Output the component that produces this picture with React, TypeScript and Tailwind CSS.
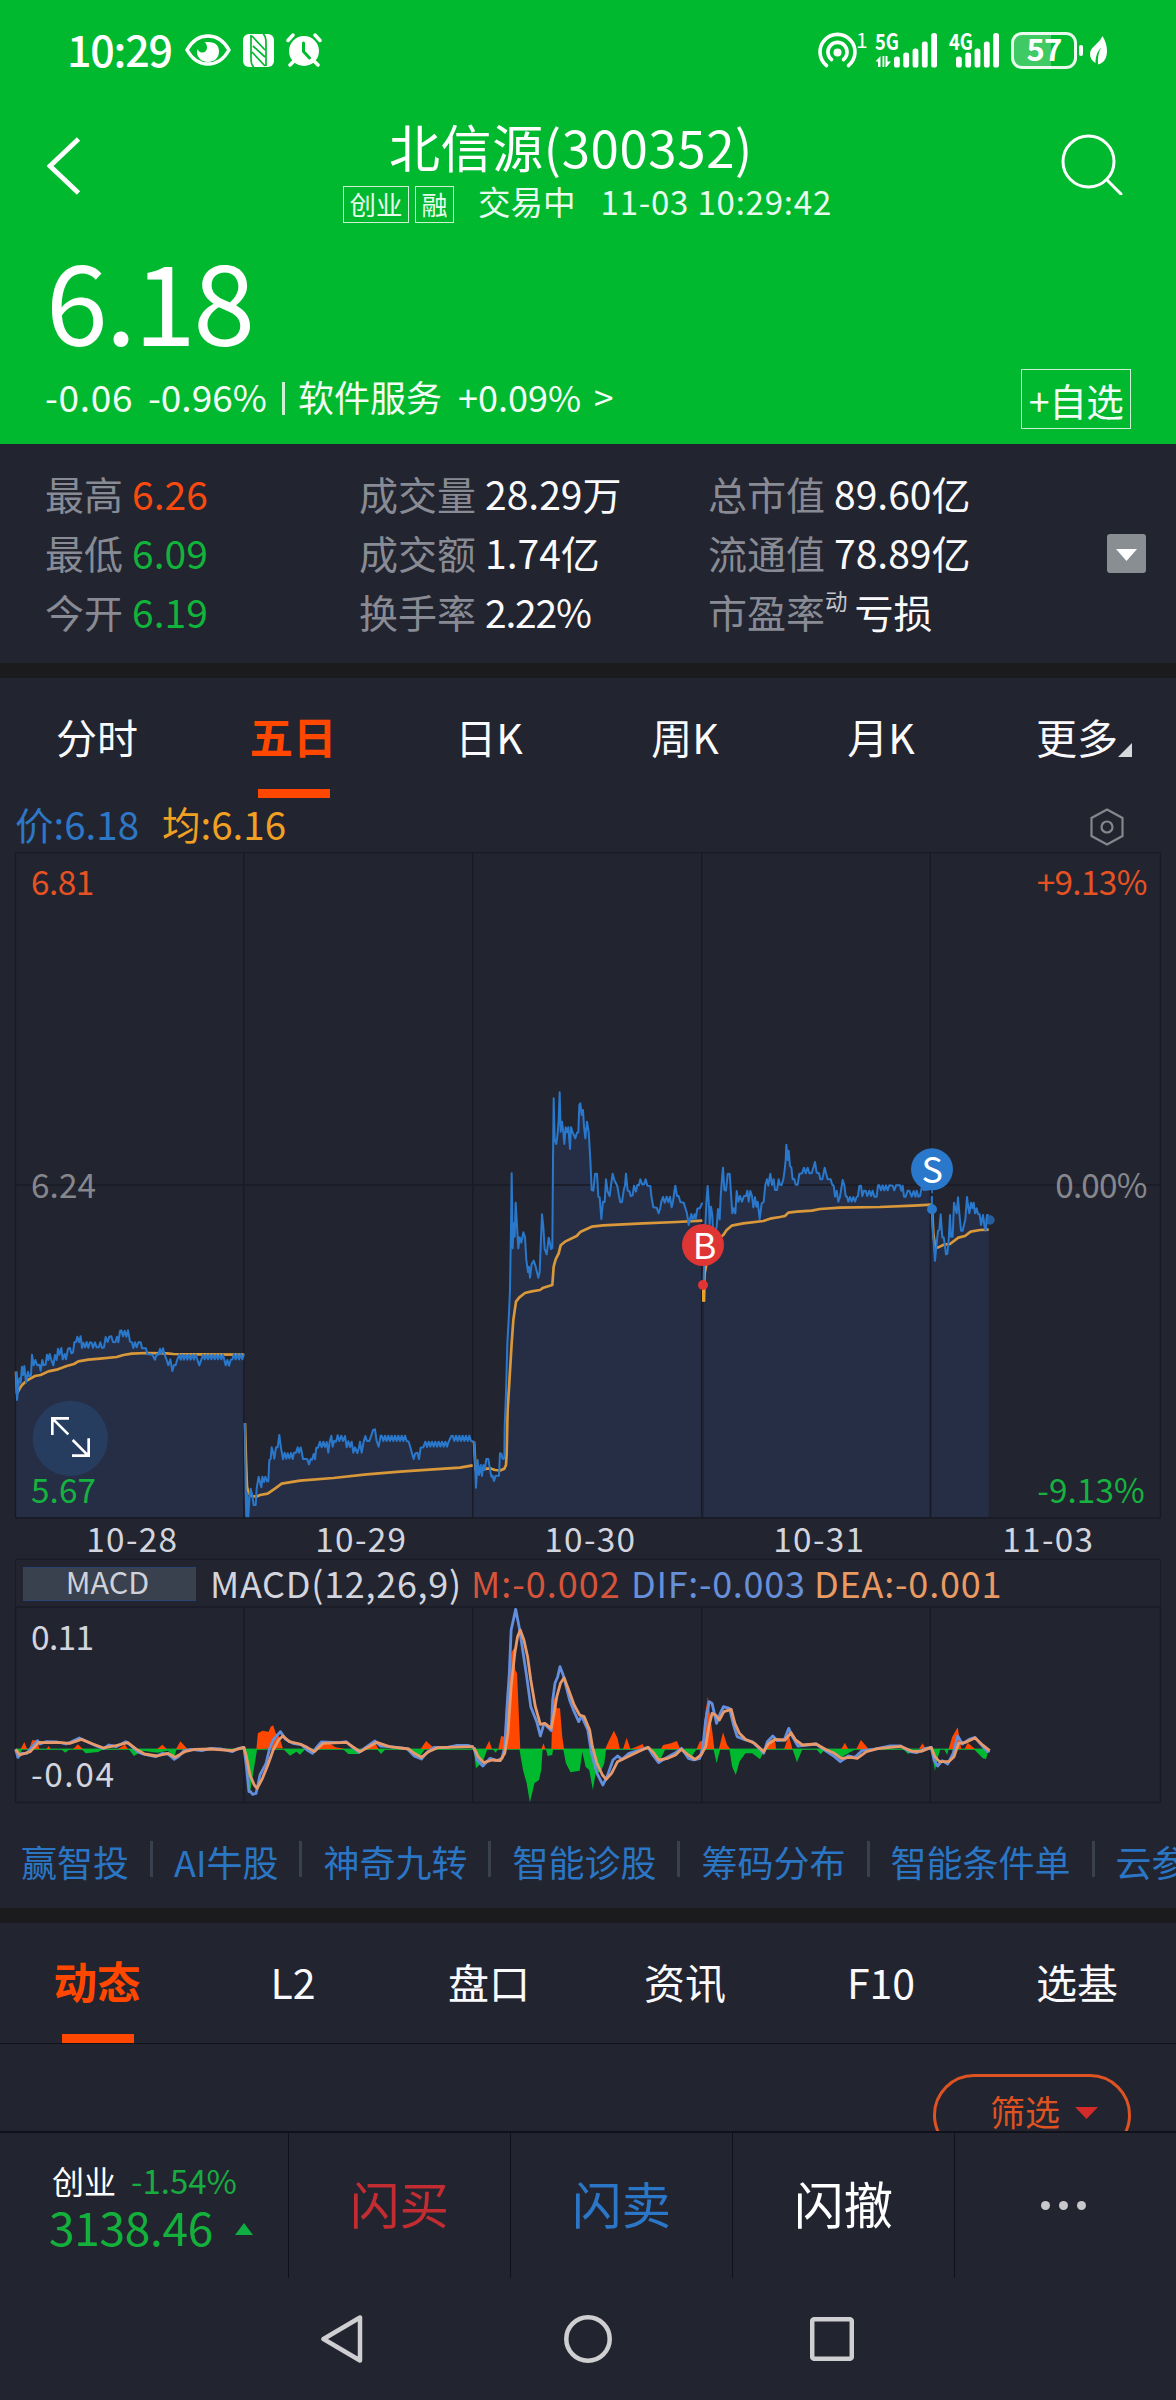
import React, { useState } from 'react';

type Point = [number, number];

// Parses "x,y x,y" and expands "~x0,x1,a,b" into a tight zigzag between two price levels
const parse = (src: string): Point[] => {
  const points: Point[] = [];
  src.trim().split(/\s+/).forEach((token) => {
    if (token[0] === '~') {
      const [x0, x1, a, b] = token.slice(1).split(',').map(Number);
      let up = true;
      for (let x = x0; x <= x1; x += 5) {
        points.push([x, up ? a : b]);
        up = !up;
      }
      return;
    }
    const [x, y] = token.split(',').map(Number);
    points.push([x, y]);
  });
  return points;
};

const toLine = (points: Point[]) => 'M' + points.map((p) => p.join(' ')).join('L');

interface Session {
  dx: number;
  dy: number;
  price: string;
  avg: string;
}

// Plot units are a third of a pixel, dx / dy is the origin of each session
const sessions: Session[] = [
  {
    dx: 0,
    dy: 1224,
    price:
      '48,335 51,420 58,355 62,368 66,320 70,345 73,318 78,368 84,335 88,350 93,345 96,284 101,316 106,300 112,316 118,314 122,332 127,300 131,316 137,314 141,284 145,300 149,282 154,300 160,316 165,285 170,300 174,266 178,284 184,264 188,298 194,282 198,298 204,266 210,264 214,280 219,278 223,247 228,246 232,230 237,247 242,229 246,264 250,248 255,262 260,246 265,263 270,247 275,248 279,263 285,247 290,262 296,262 301,247 306,264 312,262 317,231 323,246 328,230 334,229 339,246 346,247 351,230 355,247 360,213 364,211 369,229 374,212 379,230 384,211 390,245 396,247 400,264 405,247 410,262 415,247 422,247 426,265 438,265 442,282 457,284 465,299 470,283 475,284 480,266 484,282 489,265 494,284 500,300 505,316 511,298 517,333 522,315 527,316 532,298 538,283 ~542,592,299,284 598,316 604,299 ~609,672,284,298 677,316 682,300 687,317 692,300 ~697,733,298,282',
    avg: '48,335 51,400 58,387 66,375 80,362 92,355 105,348 122,345 145,334 170,329 200,318 222,312 235,304 265,299 300,296 350,291 370,285 395,281 440,279 500,280 520,282 600,283 732,284',
  },
  {
    dx: 0,
    dy: 1224,
    price:
      '735,490 737,700 739,769 742,700 745,769 748,720 752,686 757,705 761,735 767,735 770,685 773,667 776,650 780,667 784,682 787,650 792,666 796,650 801,664 805,664 808,600 812,597 815,562 820,580 823,596 828,562 833,562 838,525 843,565 846,580 849,598 854,578 859,596 863,580 868,595 873,579 878,597 882,578 888,578 893,562 897,578 902,562 906,580 909,597 918,597 922,598 927,613 932,597 936,600 941,582 945,598 949,563 954,563 960,545 965,562 970,545 975,561 980,546 985,578 989,545 994,527 998,560 1002,543 1008,545 1013,526 1018,543 1024,527 1029,543 1035,528 1040,562 1045,544 1050,561 1055,545 1060,578 1065,562 1072,579 1077,562 1080,545 1085,578 1091,545 1096,528 1101,543 1108,543 1114,526 1119,510 1125,508 1130,543 1136,560 1142,527 ~1145,1222,527,543 1226,545 1231,562 1236,580 1241,597 1246,580 1252,578 1257,597 1262,563 1270,562 1276,545 1281,561 ~1286,1350,545,560 1354,528 ~1358,1415,527,543 1422,545',
    avg: '735,490 738,600 741,680 746,700 756,708 770,710 780,705 803,701 830,682 845,671 900,662 1000,654 1100,643 1200,635 1300,628 1380,623 1418,616',
  },
  {
    dx: 1380,
    dy: 624,
    price:
      '42,1145 45,1200 48,1283 53,1200 57,1245 62,1215 66,1248 70,1215 74,1230 79,1197 85,1197 90,1228 94,1250 98,1247 102,1263 107,1247 117,1247 120,1180 124,1181 128,1197 133,1195 134,1100 138,1000 142,850 147,760 150,690 153,500 155,340 158,565 161,490 164,530 167,428 170,480 175,565 179,532 184,548 190,517 195,532 199,600 204,636 207,620 210,653 215,612 221,602 227,620 231,637 235,653 239,636 242,560 246,463 250,500 254,567 260,583 266,533 270,550 273,567 277,564 279,300 281,115 284,240 289,252 293,220 296,180 299,97 302,215 306,185 310,217 313,252 317,202 321,217 325,202 330,267 333,202 338,217 346,235 351,218 355,217 358,135 361,130 365,165 369,150 372,200 376,235 381,185 386,215 391,300 395,390 400,392 405,342 411,341 415,410 419,412 424,477 429,425 434,426 438,358 443,395 449,408 453,375 458,341 463,360 472,378 477,408 481,427 486,426 491,392 495,375 498,341 503,392 508,393 512,408 518,406 522,377 528,395 532,375 537,376 541,358 547,374 552,373 557,358 562,377 571,378 574,408 580,442 590,443 596,460 601,443 604,425 609,411 614,428 620,410 625,427 630,410 635,442 639,425 643,395 646,377 651,408 656,408 661,426 671,428 676,444 681,460 686,495 690,477 694,462 698,478 704,463 707,477 712,446 720,444 727,428',
    avg: '42,1145 47,1230 62,1228 90,1225 105,1230 122,1231 133,1226 138,1215 140,1180 143,1050 149,950 155,850 160,780 168,725 178,712 195,699 215,694 240,690 250,683 277,675 281,620 287,598 296,580 302,556 315,545 350,528 362,515 395,500 430,496 550,490 650,486 727,482',
  },
  {
    dx: 1380,
    dy: 624,
    price:
      '731,660 736,500 739,430 743,378 747,440 749,492 753,440 757,465 759,510 765,520 770,500 774,447 779,478 782,410 786,355 789,323 793,390 798,392 803,342 809,341 813,400 817,460 821,445 826,460 830,393 835,425 840,408 846,425 852,408 858,408 862,392 866,425 871,393 876,408 880,442 885,412 889,440 893,425 899,477 905,430 911,426 916,375 921,358 925,377 931,341 936,375 941,358 945,390 951,390 956,358 960,374 965,375 970,358 974,330 977,300 979,254 983,300 986,272 990,318 994,322 998,358 1003,357 1007,374 1013,374 1018,342 1026,340 1032,323 1037,340 1043,323 1048,340 1055,340 1060,323 1065,306 1070,338 1077,340 1081,358 1087,358 1094,323 1098,340 1103,358 1112,358 1117,375 1121,377 1125,410 1130,392 1135,425 1140,410 1148,360 1153,375 1157,408 1161,410 ~1165,1190,425,411 1194,408 1198,378 1203,377 1207,408 1212,392 1217,392 1222,408 1228,392 1233,408 1238,392 1243,410 1250,410 1254,376 ~1258,1292,376,391 1298,377 1303,391 1308,376 1320,376 1324,392 1328,377 1332,410 1337,410 1343,392 1348,392 1355,410 1361,393 1366,410 1370,392 1375,410 1380,408 1385,383 1392,390 1410,388',
    avg: '731,725 734,640 738,620 742,580 770,540 790,525 800,510 815,497 850,490 910,483 930,476 960,471 975,468 985,458 1010,455 1055,452 1080,447 1140,443 1260,441 1360,437 1415,434',
  },
  {
    dx: 2400,
    dy: 744,
    price:
      '395,290 397,350 399,400 402,440 405,482 409,440 414,392 418,390 422,343 427,412 431,412 434,430 438,463 442,462 446,420 450,345 453,410 458,410 462,308 466,325 470,340 474,292 478,340 483,392 488,392 492,375 496,358 501,291 505,322 508,340 513,308 517,325 521,308 525,340 530,325 534,342 539,343 543,375 549,345 553,375 557,392 561,345 566,345',
    avg: '397,340 400,400 406,445 415,442 432,434 450,432 475,413 495,408 512,395 540,390 566,389',
  },
];

const dates = ['10-28', '10-29', '10-30', '10-31', '11-03'];
const gridX = [15.5, 243.8, 472.7, 701.7, 930.3, 1160.5];

const stats = [
  [
    { label: '最高', value: '6.26', color: 'text-[#f84a0e]' },
    { label: '最低', value: '6.09', color: 'text-[#10b43a]' },
    { label: '今开', value: '6.19', color: 'text-[#10b43a]' },
  ],
  [
    { label: '成交量', value: '28.29万', color: 'text-[#fafafc]' },
    { label: '成交额', value: '1.74亿', color: 'text-[#fafafc]' },
    { label: '换手率', value: '2.22%', color: 'text-[#fafafc] tracking-[-1.2px]' },
  ],
  [
    { label: '总市值', value: '89.60亿', color: 'text-[#fafafc]' },
    { label: '流通值', value: '78.89亿', color: 'text-[#fafafc]' },
    { label: '市盈率', value: '亏损', color: 'text-[#fafafc]', sup: '动' },
  ],
];

const links = ['赢智投', 'AI牛股', '神奇九转', '智能诊股', '筹码分布', '智能条件单', '云参数'];

const Signal = ({ label, left }: { label: string; left: number }) => (
  <svg className="overflow-visible" width={left + 44} height="36" viewBox={`0 0 ${left + 44} 36`} fill="white">
    <text x="0" y="18" fontSize="22.500" fontWeight="700" textLength="24" lengthAdjust="spacingAndGlyphs">
      {label}
    </text>
    {left > 10 && (
      <path d="M0.5 29.500 5.500 24v11H3v-5.500zM7.500 24h1.800v11H7.500zM10.500 24h2v5.500h3.500L11.500 35h-1z" />
    )}
    {[11, 15, 19, 26, 34.5].map((h, i) => (
      <rect key={h} x={left + i * 9.3} y={35.5 - h} width="5.8" height={h} rx="2.600" />
    ))}
  </svg>
);

const StatusBar = () => (
  <div className="flex h-[100px] items-center pl-[67px] pr-[69px]">
    <span className="-mt-[5px] w-[118px] text-[43px] font-medium leading-[50px] tracking-[-1.2px]">10:29</span>
    <svg width="46" height="32" viewBox="0 0 46 32" fill="none">
      <path d="M2 16C7 7 14 2 23 2s16 5 21 14c-5 9-12 14-21 14S7 25 2 16Z" stroke="white" strokeWidth="3.400" />
      <path d="M23 8c8 0 11 4 11 9.500C34 24 29 28 23 28s-11-4-11-10c0-1 .3-2 .8-3 .5 2 2 3.500 4.200 3.500 3 0 5-2 5-5C22 11 21 9 19.500 8.300 20.500 8 22 8 23 8Z" fill="white" />
    </svg>
    <svg className="ml-3" width="31" height="33" viewBox="0 0 31 33">
      <rect width="31" height="33" rx="6" fill="white" />
      <path d="M8 1v23c0 5 1 8 3 9M23 32V9c0-5-1-8-3-9M9 2l13 14M10 12l12 11M9 18l13 14" fill="none" stroke="#00b92f" strokeWidth="1.700" />
    </svg>
    <svg className="ml-3" width="36" height="34" viewBox="0 0 36 34" fill="none" stroke="white" strokeLinecap="round">
      <circle cx="18" cy="18" r="15" fill="white" stroke="none" />
      <path d="M2 7.500 7 2M34 7.500 29 2" strokeWidth="3.500" />
      <path d="M8 28l-4 4M28 28l4 4" strokeWidth="3.500" />
      <path d="M17.500 10v8.500l6 6.500" stroke="#00b92f" strokeWidth="3" />
    </svg>

    <svg className="ml-auto overflow-visible" width="47" height="35" viewBox="0 0 47 35" fill="none" stroke="white" strokeWidth="3.600" strokeLinecap="round">
      <circle cx="19.500" cy="19.500" r="4" fill="white" stroke="none" />
      <path d="M8.500 32.500A17.500 17.500 0 1 1 30.500 32.500" />
      <path d="M13.500 26.500a9.600 9.600 0 1 1 12 0" />
      <text x="38" y="15" fontSize="21" fill="white" stroke="none">1</text>
    </svg>
    <div className="ml-[10px] flex items-center">
      <Signal label="5G" left={19} />
      <div className="ml-[11px]">
        <Signal label="4G" left={7} />
      </div>
    </div>
    <div className="ml-[11px] flex h-[37px] w-[66px] items-center justify-center rounded-[11px] border-[3px] border-white/90 bg-[linear-gradient(90deg,#40ca63_62%,transparent_62%)]">
      <span className="-mt-[4px] text-[31px] font-bold leading-[30px] tracking-[-0.8px]">57</span>
    </div>
    <div className="ml-[2px] h-[11px] w-[4px] rounded-sm bg-white" />
    <svg className="ml-[7px]" width="17" height="29" viewBox="0 0 17 29" fill="white">
      <path d="M12.500 0c3 5 4.500 10 4.500 15 0 7-3 12-9 13.500-.5-7 .5-12 3-17C7 16 5.500 21 5.500 27 2 25 0 22 0 18 0 11 9 8 12.500 0Z" />
    </svg>
  </div>
);

const Header = () => (
  <header className="h-[444px] bg-[#00b92f] text-white">
    <StatusBar />
    <div className="flex h-[142px] items-start">
      <svg className="ml-[47px] mt-[37px]" width="34" height="58" viewBox="0 0 34 58" fill="none">
        <path d="M31.500 2 3 29l28.500 27" stroke="white" strokeWidth="4.800" />
      </svg>
      <div className="ml-[262px] pt-[18px]">
        <h1 className="ml-[46px] text-[51px] font-normal leading-[56px] tracking-[0.6px]">北信源(300352)</h1>
        <div className="mt-[12px] flex text-[#e9fbee]">
          <span className="h-[37px] w-[66px] border border-white/80 text-center text-[26.500px] leading-[33px]">创业</span>
          <span className="ml-[6px] h-[37px] w-[39px] border border-white/80 text-center text-[26px] leading-[33px]">融</span>
          <span className="-mt-[3px] ml-[24px] text-[32.500px] leading-[36px]">交易中</span>
          <span className="-mt-[3px] ml-[25px] text-[33px] leading-[36px] tracking-[0.8px]">11-03 10:29:42</span>
        </div>
      </div>
      <svg className="ml-auto mr-[53px] mt-[33px]" width="62" height="62" viewBox="0 0 62 62" fill="none" stroke="white" strokeWidth="3">
        <circle cx="27.500" cy="28.500" r="25.500" />
        <path d="M46 47 60 61" strokeLinecap="round" />
      </svg>
    </div>
    <div className="pl-[46px] text-[111.5px] leading-[112px] tracking-[-2.5px]">6.18</div>
    <div className="mt-[15px] flex h-[60px] items-center pl-[45px] pr-[45px] text-[#f2fdf5]">
      <div className="-mt-[6px] flex text-[37px] leading-[40px]">
        <span className="w-[103px] tracking-[0.7px]">-0.06</span>
        <span className="w-[131px]">-0.96%</span>
        <span className="mt-[6px] h-[33px] w-[3px] bg-white/80 self-start ml-[3px]" />
        <span className="ml-[13px] w-[160px] text-[36px]">软件服务</span>
        <span className="w-[136px] text-[36px]">+0.09%</span>
        <span className="text-[35px]">&gt;</span>
      </div>
      <button className="ml-auto h-[60px] w-[110px] whitespace-nowrap border border-white/80 text-center text-[37.500px] leading-[53px] tracking-[-0.5px]">+自选</button>
    </div>
  </header>
);

const Stats = () => (
  <section className="flex h-[219px] pl-[45px] pr-[30px] pt-[20px] text-[39px]">
    <div className="grid grid-cols-[314px_349px_399px]">
      {stats.map((column, i) => (
        <div key={i}>
          {column.map((item) => (
            <div key={item.label} className="flex h-[59px] leading-[59px]">
              <span className="text-[#888b94]">{item.label}</span>
              {'sup' in item && <sup className="top-0 -mt-[11px] -mr-[2px] text-[22.5px] leading-[59px] text-[#c4c6cc]">{item.sup}</sup>}
              <span className={`ml-[9px] ${item.color}`}>{item.value}</span>
            </div>
          ))}
        </div>
      ))}
    </div>
    <button className="mt-[70px] flex h-[39px] w-[39px] shrink-0 items-center justify-center rounded-[3px] bg-[#888e92]">
      <svg width="21" height="12" viewBox="0 0 21 12" className="mt-[2px]"><path d="M0 0h21L10.500 12z" fill="white" /></svg>
    </button>
  </section>
);

interface TabsProps {
  items: string[];
  active: string;
  onSelect: (item: string) => void;
}

const Tabs: React.FC<TabsProps> = ({ items, active, onSelect }) => (
  <nav className="grid h-[120px] grid-cols-6">
    {items.map((item) => (
      <button key={item} onClick={() => onSelect(item)} className="flex flex-col items-center">
        <span className={`-ml-[2px] flex h-[111px] leading-[116px] ${item === active ? 'text-[43.500px] font-bold text-[#ff4700]' : 'text-[41px] text-[#fafafc]'}`}>
          {item}
          {item === '更多' && (
            <svg width="14" height="14" viewBox="0 0 14 14" className="-mr-[14px] mt-[65px]"><path d="M14 0v14H0z" fill="#d6d8dc" /></svg>
          )}
        </span>
        {item === active && <span className="h-[9px] w-[72px] bg-[#ff4700]" />}
      </button>
    ))}
  </nav>
);

const PriceChart = () => (
  <svg className="block" width="1176" height="708" viewBox="0 0 3528 2124">
    {sessions.map(({ dx, dy, price }, i) => {
      const points = parse(price);
      const base = 1996 - dy;
      return (
        <path
          key={i}
          transform={`translate(${dx} ${dy})`}
          d={`${toLine(points)}L${points[points.length - 1][0]} ${base}L${points[0][0]} ${base}Z`}
          fill="#262e46"
        />
      );
    })}

    <g stroke="#181a25" strokeWidth="4">
      <path d="M46 2H3482M46 999H3482M46 1998H3482M46 2122H3482" />
      {gridX.map((x) => (
        <path key={x} d={`M${x * 3} 0V1998`} />
      ))}
    </g>

    {sessions.map(({ dx, dy, price, avg }, i) => (
      <g key={i} transform={`translate(${dx} ${dy})`} fill="none" strokeLinejoin="round">
        <path d={toLine(parse(avg))} stroke="#d9983a" strokeWidth="8" />
        <path d={toLine(parse(price))} stroke="#2a78cb" strokeWidth="6" />
      </g>
    ))}

    {/* Buy / sell markers */}
    <path d="M2111 1290V1349" stroke="#e8a22c" strokeWidth="10" />
    <circle cx="2109" cy="1299" r="15" fill="#e03535" />
    <circle cx="2109" cy="1179" r="63" fill="#e03535" />
    <path d="M2796 1010V1060" stroke="#2a78cb" strokeWidth="5" strokeDasharray="14 8" />
    <circle cx="2796" cy="1072" r="15" fill="#2a78cb" />
    <circle cx="2796" cy="952" r="63" fill="#2a78cb" />
    <circle cx="2970" cy="1104" r="14" fill="#2a78cb" fillOpacity="0.7" />
    <g fill="white" fontSize="108" textAnchor="middle">
      <text x="2114" y="1220">B</text>
      <text x="2797" y="992">S</text>
    </g>

    {/* Expand button */}
    <circle cx="211" cy="1759" r="113" fill="#263d60" />
    <path d="M207 1699H157V1749M157 1699L205 1747M266 1759V1811H216M218 1764L264 1810" fill="none" stroke="white" strokeWidth="8" />

    <g fontSize="100">
      <text x="93" y="128" fill="#e65222" textLength="190">6.81</text>
      <text x="93" y="1039" fill="#85878d" textLength="195">6.24</text>
      <text x="93" y="1952" fill="#16b240" textLength="195">5.67</text>
      <g textAnchor="end">
        <text x="3442" y="128" fill="#e65222" textLength="332">+9.13%</text>
        <text x="3442" y="1039" fill="#85878d" textLength="276">0.00%</text>
        <text x="3434" y="1952" fill="#16b240" textLength="322">-9.13%</text>
      </g>
      {dates.map((date, i) => (
        <text key={date} x={395 + i * 687} y="2101" fill="#d3d5de" textAnchor="middle" textLength="272">
          {date}
        </text>
      ))}
    </g>
  </svg>
);

const dif = [
  '44,628 50,652 60,640 75,640 90,620 105,602 112,612 130,605 160,606 185,612 200,605 222,594 240,603 270,618 290,626 305,615 325,620 352,605 365,615 385,635 400,642 435,650 455,640 470,642 488,658 500,650 515,632 535,628 565,632 590,625 620,627 650,635 665,626 683,622 690,680 697,755 702,755 707,763 717,760 728,705 745,670 755,625 765,600 785,575 800,598 820,610 845,615 860,630 875,640 888,620 900,606 950,608 970,605 985,620 1005,637 1030,618 1050,603 1065,618 1090,620 1140,626 1160,648 1180,657 1195,638 1215,622 1250,623 1280,616 1310,616 1326,622',
  '30,622 38,660 50,678 66,655 80,662 92,655 98,620 103,500 108,400 112,270 122,208 130,265 145,400 155,500 168,545 176,588 184,550 200,572 203,480 208,430 214,410 219,380 226,405 240,480 250,515 260,545 266,528 280,570 288,640 300,700 313,735 322,710 335,660 345,648 355,658 370,640 390,632 412,622 422,645 435,668 450,655 470,640 485,625 500,655 512,660 525,655 532,620 538,540 546,485 552,490 562,550 570,520 577,500 590,505 600,560 607,590 625,600 640,605 655,625 665,640 673,605 685,588 695,602 710,600 720,565 728,590 740,618 780,612 800,632 820,650 833,665 850,648 865,652 880,632 905,628 940,618 965,618 985,635 1000,638 1020,625 1032,622 1038,660 1046,678 1056,662 1068,672 1080,640 1090,588 1100,612 1115,598 1128,592 1145,620 1155,635 1160,632',
];

const dea = [
  '44,628 55,645 85,635 108,607 130,608 165,607 195,610 228,598 260,612 290,624 320,618 358,608 385,630 405,642 440,648 470,640 490,652 520,634 545,628 590,627 650,632 683,622 690,650 700,705 712,735 720,745 735,715 750,675 765,630 780,600 792,588 810,605 840,612 860,622 880,635 905,610 970,607 1008,635 1055,607 1090,620 1145,627 1160,640 1180,652 1200,635 1225,623 1326,620',
  '30,622 40,650 52,668 70,660 88,662 98,640 105,580 112,440 120,340 126,290 132,270 140,300 148,350 155,420 165,500 176,553 186,550 200,565 206,520 212,470 220,430 228,413 238,450 250,495 262,525 272,530 284,570 290,620 300,670 312,705 320,718 332,700 345,665 365,652 390,635 412,622 425,640 435,660 455,655 472,645 485,628 500,645 515,658 528,645 538,620 545,560 552,520 560,525 568,540 578,515 594,508 602,550 612,580 625,598 645,610 665,635 675,612 690,598 712,600 725,578 735,600 750,615 780,612 800,628 820,640 835,655 855,652 870,655 890,635 915,626 965,619 990,634 1010,634 1032,622 1040,650 1050,665 1070,665 1082,650 1092,610 1105,608 1128,594 1142,612 1160,632',
];

const red = [
  'M58,627 68,606 76,627ZM82,627 90,601 105,601 110,627ZM130,627 136,618 142,627ZM205,627 218,613 232,627ZM330,627 350,614 358,627ZM440,627 455,614 467,627ZM493,627 505,604 525,627ZM718,627 722,580 735,572 752,575 758,560 765,556 772,580 782,590 792,625ZM885,627 900,610 925,612 940,622 965,627ZM1015,627 1050,608 1060,627ZM1178,627 1193,603 1218,627Z',
  'M55,627 64,602 70,627ZM84,627 90,588 97,590 103,450 108,440 112,340 118,325 121,390 125,400 130,560 132,627ZM178,627 183,610 187,627ZM200,627 203,490 208,470 212,505 219,505 224,590 228,627ZM318,627 325,605 337,572 345,595 350,627ZM357,627 365,593 373,627ZM375,627 400,612 405,627ZM440,627 445,615 462,610 475,603 482,627ZM518,627 525,605 533,600 537,520 543,470 548,530 553,580 557,627ZM567,627 576,577 585,615 592,627ZM667,627 675,600 690,597 692,627ZM710,627 720,585 728,627ZM835,627 843,608 850,627ZM868,627 878,600 895,627ZM1005,627 1013,610 1020,627ZM1070,627 1078,590 1090,562 1095,605 1098,627ZM1105,627 1112,608 1128,627Z',
];

const green = [
  'M44,627 52,658 62,627ZM170,627 183,638 195,627ZM228,627 240,640 275,636 290,627ZM360,627 375,648 400,632 440,638 470,632 488,650 495,627ZM685,627 692,720 700,758 708,705 720,627ZM793,627 812,647 830,635 840,644 855,627ZM865,627 878,640 885,627ZM960,627 975,642 1005,642 1015,627ZM1055,627 1067,642 1080,627ZM1140,627 1160,643 1175,650 1190,627Z',
  'M30,627 35,685 50,665 60,627ZM72,627 78,638 83,627ZM130,627 138,690 146,730 153,787 158,760 163,730 173,720 178,690 181,627ZM188,627 192,648 202,645 204,627ZM226,627 232,670 242,697 262,692 268,635 275,680 283,690 291,750 297,700 308,695 316,670 320,627ZM415,627 430,660 440,655 450,627ZM490,627 505,655 518,627ZM555,627 562,670 570,627ZM590,627 596,680 604,705 612,665 625,640 640,640 657,658 668,627ZM728,627 738,667 750,627ZM780,627 790,643 800,627ZM810,627 832,655 850,640 868,627ZM970,627 982,643 990,627ZM1032,627 1040,692 1048,645 1052,627ZM1060,627 1067,645 1070,627ZM1125,627 1145,655 1152,657 1158,627Z',
];

const macdFrames = ['translate(0 -68) scale(0.35714 0.33333)', 'translate(460 -68) scale(0.45663 0.33333)'];

const MacdChart = () => (
  <svg className="block" width="1176" height="196" viewBox="0 0 1176 196">
    <g stroke="#181a25" strokeWidth="1.300">
      <path d="M15.500 194.500H1160.500" />
      {gridX.map((x) => (
        <path key={x} d={`M${x} 0V194.500`} />
      ))}
    </g>
    <path d="M15.500 141.300H989" stroke="#0e9c33" strokeWidth="1.500" />
    {macdFrames.map((frame, i) => (
      <g key={frame} transform={frame}>
        <path d={red[i]} fill="#ff4700" />
        <path d={green[i]} fill="#00b92f" />
        <g fill="none" strokeLinejoin="round" strokeWidth="2.800">
          <path d={toLine(parse(dif[i]))} stroke="#638fdd" vectorEffect="non-scaling-stroke" />
          <path d={toLine(parse(dea[i]))} stroke="#e8996b" vectorEffect="non-scaling-stroke" />
        </g>
      </g>
    ))}
    <g fill="#d3d5de" fontSize="33.500">
      <text x="31" y="42" textLength="63">0.11</text>
      <text x="31" y="179" textLength="83">-0.04</text>
    </g>
  </svg>
);

const MacdHeader = () => (
  <div className="mx-[15px] flex h-[48px] items-center border-x border-b-2 border-[#1a1c27] pl-[7px] text-[36px]">
    <button className="mt-[2px] flex h-[34px] w-[173px] justify-center border border-[#2b4370] bg-[#3a414e] text-[30.500px] leading-[27px] text-[#cfd2da]">
      <span className="-ml-[4px]">MACD</span>
    </button>
    <div className="-mt-[3px] flex whitespace-nowrap leading-[46px]">
      <span className="ml-[14px] w-[261px] tracking-[0.7px] text-[#d3d5de]">MACD(12,26,9)</span>
      <span className="w-[160px] tracking-[1px] text-[#d6553a]">M:-0.002</span>
      <span className="w-[183px] tracking-[0.7px] text-[#6790db]">DIF:-0.003</span>
      <span className="tracking-[0.8px] text-[#ea9b62]">DEA:-0.001</span>
    </div>
  </div>
);

const QuickLinks = () => (
  <div className="flex h-[104px] items-center overflow-hidden whitespace-nowrap pl-[21px] pt-[10px] text-[36px] leading-[40px] text-[#2b76c4]">
    {links.map((link, i) => (
      <React.Fragment key={link}>
        {i > 0 && <span className="-mt-[4px] ml-[21px] mr-[21px] h-[36px] w-[3px] shrink-0 bg-[#3a414e]" />}
        <span className="shrink-0">{link}</span>
      </React.Fragment>
    ))}
  </div>
);

const TradeBar = () => (
  <footer className="flex h-[147px] border-t-2 border-[#10111a]">
    <div className="w-[289px] border-r border-[#10111a] pl-[52px] pt-[27px]">
      <div className="flex text-[33px] leading-[40px]">
        <span className="w-[79px] text-[32px] text-white">创业</span>
        <span className="text-[#18ab40]">-1.54%</span>
      </div>
      <div className="-ml-[3px] mt-px flex items-center text-[46px] leading-[50px] tracking-[-0.3px] text-[#14b03c]">
        3138.46
        <svg className="ml-[22px] mt-[6px]" width="18" height="12" viewBox="0 0 18 12"><path d="M9 0l9 12H0z" fill="#0fae42" /></svg>
      </div>
    </div>
    <button className="w-[222px] border-r border-[#10111a] pb-[5px] text-[49.5px] text-[#c32d31]">闪买</button>
    <button className="w-[222px] border-r border-[#10111a] pb-[5px] text-[49.5px] text-[#2b76c6]">闪卖</button>
    <button className="w-[222px] border-r border-[#10111a] pb-[5px] text-[49.5px] text-white">闪撤</button>
    <button className="flex flex-1 items-center justify-center gap-[9px] pr-[4px]">
      <span className="h-[9px] w-[9px] rounded-full bg-[#c8c8ca]" />
      <span className="h-[9px] w-[9px] rounded-full bg-[#c8c8ca]" />
      <span className="h-[9px] w-[9px] rounded-full bg-[#c8c8ca]" />
    </button>
  </footer>
);

const SystemNav = () => (
  <div className="flex h-[122px] items-center pl-[321px]">
    <svg width="42" height="48" viewBox="0 0 42 48" fill="none" stroke="#cfcfd1" strokeWidth="4.500" strokeLinejoin="round">
      <path d="M39 2.500v43L2.500 24z" />
    </svg>
    <svg className="ml-[201px]" width="48" height="48" viewBox="0 0 48 48" fill="none" stroke="#cfcfd1" strokeWidth="4.500">
      <circle cx="24" cy="24" r="21.700" />
    </svg>
    <svg className="ml-[198px]" width="44" height="44" viewBox="0 0 44 44" fill="none" stroke="#cfcfd1" strokeWidth="4.500">
      <rect x="2.200" y="2.200" width="39.600" height="39.600" rx="2" />
    </svg>
  </div>
);

export default function App() {
  const [period, setPeriod] = useState('五日');
  const [panel, setPanel] = useState('动态');

  return (
    <div className="flex h-[2400px] w-[1176px] flex-col overflow-hidden bg-[#222430] font-['Noto_Sans_CJK_SC',sans-serif]">
      <Header />
      <Stats />
      <div className="h-[15px] bg-[#1b1b1e]" />
      <Tabs items={['分时', '五日', '日K', '周K', '月K', '更多']} active={period} onSelect={setPeriod} />

      <div className="flex h-[54px] items-center pl-[15px] pr-[52px] text-[38.500px]">
        <div className="-mt-[5px] flex leading-[50px]">
          <span className="w-[147px] text-[#2d77c6]">价:6.18</span>
          <span className="text-[#f0a022]">均:6.16</span>
        </div>
        <svg className="ml-auto mt-[3px]" width="34" height="38" viewBox="0 0 34 38" fill="none" stroke="#85878d" strokeWidth="2.200">
          <path d="M17 1.500 32.500 10v18L17 36.500 1.500 28V10z" />
          <circle cx="17" cy="19" r="5.500" />
        </svg>
      </div>
      <PriceChart />
      <MacdHeader />
      <MacdChart />
      <QuickLinks />

      <div className="h-[15px] bg-[#1b1b1e]" />
      <Tabs items={['动态', 'L2', '盘口', '资讯', 'F10', '选基']} active={panel} onSelect={setPanel} />
      <div className="flex h-[88px] items-start justify-end overflow-hidden border-t border-[#10111a] pr-[45px] pt-[30px]">
        <button className="flex h-[82px] w-[198px] shrink-0 items-start rounded-full border-[3px] border-[#de5322] pl-[54px] pt-[14px] text-[35px] leading-[40px] text-[#de5322]">
          筛选
          <svg className="ml-[15px] mt-[16px]" width="23" height="12" viewBox="0 0 23 12"><path d="M0 0h23L11.500 12z" fill="#d42a2a" /></svg>
        </button>
      </div>
      <TradeBar />
      <SystemNav />
    </div>
  );
}
